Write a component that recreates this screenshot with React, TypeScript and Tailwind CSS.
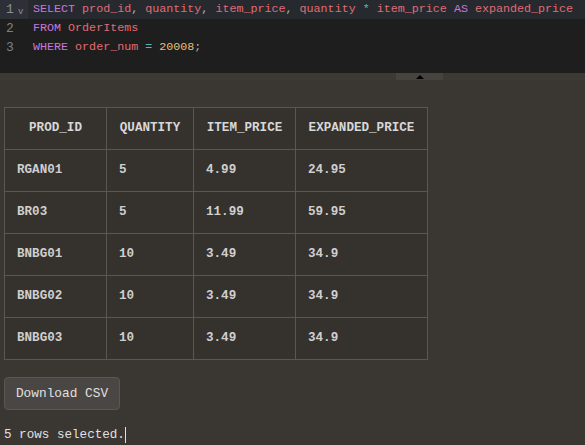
import React from "react";

const K = ({ children }: { children: React.ReactNode }) => <span className="text-[#c678dd]">{children}</span>;
const I = ({ children }: { children: React.ReactNode }) => <span className="text-[#e06c75]">{children}</span>;
const O = ({ children }: { children: React.ReactNode }) => <span className="text-[#56b6c2]">{children}</span>;
const N = ({ children }: { children: React.ReactNode }) => <span className="text-[#e5c07b]">{children}</span>;
const P = ({ children }: { children: React.ReactNode }) => <span className="text-[#abb2bf]">{children}</span>;

const rows = [
  ["RGAN01", "5", "4.99", "24.95"],
  ["BR03", "5", "11.99", "59.95"],
  ["BNBG01", "10", "3.49", "34.9"],
  ["BNBG02", "10", "3.49", "34.9"],
  ["BNBG03", "10", "3.49", "34.9"],
];

export default function App() {
  const mono = { fontFamily: '"Liberation Mono", "DejaVu Sans Mono", monospace' };
  return (
    <div className="w-[585px] h-[445px] bg-[#3a3632] overflow-hidden" style={mono}>
      <div className="h-[73px] bg-[#1e1e1e] text-[11.7px]">
        <div className="flex h-[19px] bg-[#262a2f] items-center">
          <div className="w-[28px] h-full bg-[#2d3137] flex items-center text-[#8a8f96] relative">
            <span className="ml-[6px] text-[13px]">1</span>
            <span className="absolute left-[18px] top-[6px] text-[9px] text-[#8a8f96]">v</span>
          </div>
          <div className="pl-[5px] whitespace-pre">
            <K>SELECT</K> <I>prod_id</I><P>,</P> <I>quantity</I><P>,</P> <I>item_price</I><P>,</P> <I>quantity</I> <O>*</O> <I>item_price</I> <K>AS</K> <I>expanded_price</I>
          </div>
        </div>
        <div className="flex h-[19px] items-center">
          <div className="w-[28px] text-[#7d8187]"><span className="ml-[6px] text-[13px]">2</span></div>
          <div className="pl-[5px] whitespace-pre"><K>FROM</K> <I>OrderItems</I></div>
        </div>
        <div className="flex h-[19px] items-center">
          <div className="w-[28px] text-[#7d8187]"><span className="ml-[6px] text-[13px]">3</span></div>
          <div className="pl-[5px] whitespace-pre"><K>WHERE</K> <I>order_num</I> <O>=</O> <N>20008</N><P>;</P></div>
        </div>
      </div>
      <div className="h-[7px] bg-[#3d3934] flex justify-start">
        <div className="ml-[396px] w-[47px] h-full bg-[#47433f] flex items-center justify-center">
          <div className="w-0 h-0 border-l-[4px] border-r-[4px] border-b-[4px] border-l-transparent border-r-transparent border-b-black" />
        </div>
      </div>
      <div className="pt-[27px] pl-[4px]">
        <table className="border-collapse bg-[#35312d] text-[12.6px] font-bold">
          <thead>
            <tr className="h-[42px] text-[#d8d8d8]">
              <th className="border border-[#5a5652] w-[102px] text-center font-bold">PROD_ID</th>
              <th className="border border-[#5a5652] w-[87px] text-center font-bold">QUANTITY</th>
              <th className="border border-[#5a5652] w-[102px] text-center font-bold">ITEM_PRICE</th>
              <th className="border border-[#5a5652] w-[132px] text-center font-bold">EXPANDED_PRICE</th>
            </tr>
          </thead>
          <tbody>
            {rows.map((r) => (
              <tr key={r[0]} className="h-[42px] text-[#cfcfcf]">
                {r.map((c, i) => (
                  <td key={i} className="border border-[#5a5652] pl-[12px]">{c}</td>
                ))}
              </tr>
            ))}
          </tbody>
        </table>
        <button className="mt-[17px] h-[33px] w-[116px] rounded-[4px] bg-[#4a4643] border border-[#5a5652] text-[#e0e0e0] text-[12.8px]" style={mono}>
          Download CSV
        </button>
        <div className="mt-[16px] text-[12.6px] text-[#e0e0e0] flex items-center">
          5 rows selected.<span className="inline-block w-[1px] h-[16px] bg-[#e0e0e0]" />
        </div>
      </div>
    </div>
  );
}
